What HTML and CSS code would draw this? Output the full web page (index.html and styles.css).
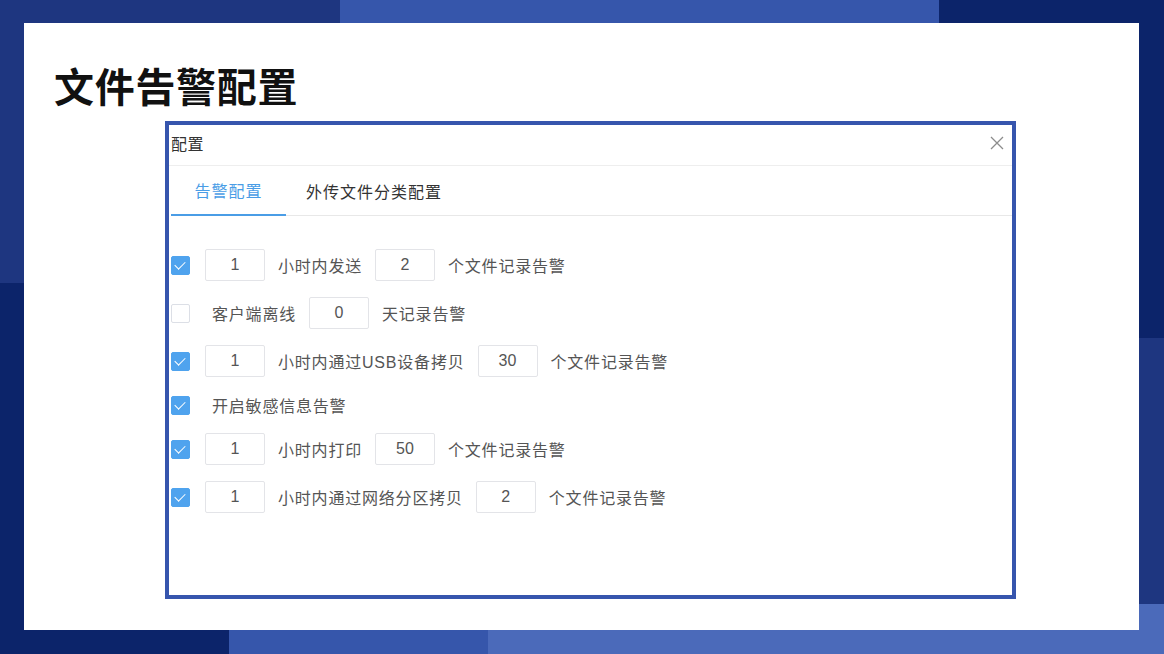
FILE: index.html
```html
<!DOCTYPE html>
<html lang="zh-CN">
<head>
    <meta charset="UTF-8">
    <meta name="viewport" content="width=device-width, initial-scale=1.0">
    <title>文件告警配置</title>
    <link rel="stylesheet" href="styles.css">
</head>
<body>
    <div class="band band-top">
        <div class="blk c-mid" style="width: 340px"></div>
        <div class="blk c-light" style="width: 599px"></div>
        <div class="blk c-navy" style="flex: 1"></div>
    </div>
    <div class="middle">
        <div class="side side-left">
            <div class="blk c-mid" style="height: 260px"></div>
            <div class="blk c-navy" style="flex: 1"></div>
        </div>
        <div class="panel">
            <h1 class="page-title">文件告警配置</h1>
            <div class="modal">
                <div class="modal-header">
                    <span class="modal-title">配置</span>
                    <svg class="close" width="14" height="14" viewBox="0 0 14 14">
                        <path d="M1 1L13 13M13 1L1 13" stroke="#8c8c8c" stroke-width="1.3" fill="none"/>
                    </svg>
                </div>
                <div class="tabs">
                    <div class="tab active">告警配置</div>
                    <div class="tab">外传文件分类配置</div>
                </div>
                <div class="modal-body">
                    <div class="row">
                        <span class="check on"></span>
                        <input class="num" type="text" value="1">
                        <span class="txt">小时内发送</span>
                        <input class="num" type="text" value="2">
                        <span class="txt">个文件记录告警</span>
                    </div>
                    <div class="row">
                        <span class="check"></span>
                        <span class="txt first">客户端离线</span>
                        <input class="num" type="text" value="0">
                        <span class="txt">天记录告警</span>
                    </div>
                    <div class="row">
                        <span class="check on"></span>
                        <input class="num" type="text" value="1">
                        <span class="txt">小时内通过USB设备拷贝</span>
                        <input class="num" type="text" value="30">
                        <span class="txt">个文件记录告警</span>
                    </div>
                    <div class="row row-short">
                        <span class="check on"></span>
                        <span class="txt first">开启敏感信息告警</span>
                    </div>
                    <div class="row">
                        <span class="check on"></span>
                        <input class="num" type="text" value="1">
                        <span class="txt">小时内打印</span>
                        <input class="num" type="text" value="50">
                        <span class="txt">个文件记录告警</span>
                    </div>
                    <div class="row">
                        <span class="check on"></span>
                        <input class="num" type="text" value="1">
                        <span class="txt">小时内通过网络分区拷贝</span>
                        <input class="num" type="text" value="2">
                        <span class="txt">个文件记录告警</span>
                    </div>
                </div>
            </div>
        </div>
        <div class="side side-right">
            <div class="blk c-navy" style="height: 315px"></div>
            <div class="blk c-mid" style="height: 266px"></div>
            <div class="blk c-pale" style="flex: 1"></div>
        </div>
    </div>
    <div class="band band-bottom">
        <div class="blk c-navy" style="width: 229px"></div>
        <div class="blk c-light" style="width: 259px"></div>
        <div class="blk c-pale" style="flex: 1"></div>
    </div>
</body>
</html>
```

FILE: styles.css
```css
body {
    margin: 0;
    padding: 0;
    width: 1164px;
    height: 654px;
    overflow: hidden;
    font-family: "Liberation Sans", "Noto Sans CJK SC", sans-serif;
    display: flex;
    flex-direction: column;
}
.c-mid { background: #1e3680; }
.c-light { background: #3656ab; }
.c-navy { background: #0c246a; }
.c-pale { background: #4b6aba; }

.band {
    display: flex;
    height: 23px;
}
.band-bottom {
    height: 24px;
}
.middle {
    display: flex;
    height: 607px;
}
.side {
    display: flex;
    flex-direction: column;
}
.side-left { width: 24px; }
.side-right { width: 25px; }

.panel {
    flex: 1;
    background: #fff;
    padding: 38px 0 0 30px;
    box-sizing: border-box;
}
.page-title {
    margin: 0 0 12px 0;
    font-family: "Noto Sans CJK SC", sans-serif;
    font-size: 40px;
    font-weight: 700;
    line-height: 48px;
    letter-spacing: 0.7px;
    color: #111;
}
.modal {
    margin-left: 111px;
    width: 851px;
    height: 478px;
    border: 4px solid #3655ad;
    box-sizing: border-box;
    background: #fff;
}
.modal-header {
    height: 41px;
    border-bottom: 1px solid #eeeeee;
    display: flex;
    align-items: center;
    justify-content: space-between;
    padding: 0 8px 5px 2px;
    box-sizing: border-box;
}
.modal-title {
    font-family: "Noto Sans CJK SC", sans-serif;
    font-size: 16px;
    color: #333;
    letter-spacing: 0.5px;
}
.tabs {
    display: flex;
    height: 49px;
    margin-left: 2px;
    border-bottom: 1px solid #e8e8e8;
}
.tab {
    font-family: "Noto Sans CJK SC", sans-serif;
    font-size: 16px;
    letter-spacing: 1px;
    color: #333;
    padding: 0 20px;
    display: flex;
    align-items: center;
    box-sizing: border-box;
}
.tab.active {
    color: #4a9de6;
    width: 115px;
    justify-content: center;
    border-bottom: 2px solid #4a9de6;
    margin-bottom: -1px;
}
.modal-body {
    padding: 33px 0 0 2px;
    display: flex;
    flex-direction: column;
    gap: 16px;
}
.row {
    display: flex;
    align-items: center;
    height: 32px;
}
.row-short {
    height: 24px;
}
.check {
    width: 17px;
    height: 17px;
    border: 1px solid #dcdfe6;
    border-radius: 2px;
    box-sizing: content-box;
    background: #fff;
    position: relative;
    flex-shrink: 0;
}
.check.on {
    background: #4fa3ee;
    border-color: #4fa3ee;
}
.check.on::after {
    content: "";
    position: absolute;
    left: 5px;
    top: 2px;
    width: 5px;
    height: 9px;
    border: solid #fff;
    border-width: 0 1.5px 1.5px 0;
    transform: rotate(45deg);
}
.num {
    width: 60px;
    height: 32px;
    box-sizing: border-box;
    border: 1px solid #e3e4e8;
    border-radius: 2px;
    text-align: center;
    font-family: "Liberation Sans", sans-serif;
    font-size: 16px;
    color: #555;
    margin: 0 13px;
    padding: 0;
    outline: none;
}
.check + .num {
    margin-left: 15px;
}
.txt {
    font-family: "Liberation Sans", "Noto Sans CJK SC", sans-serif;
    font-size: 16px;
    letter-spacing: 0.8px;
    color: #555;
    white-space: nowrap;
}
.txt.first {
    margin-left: 22px;
}
```
